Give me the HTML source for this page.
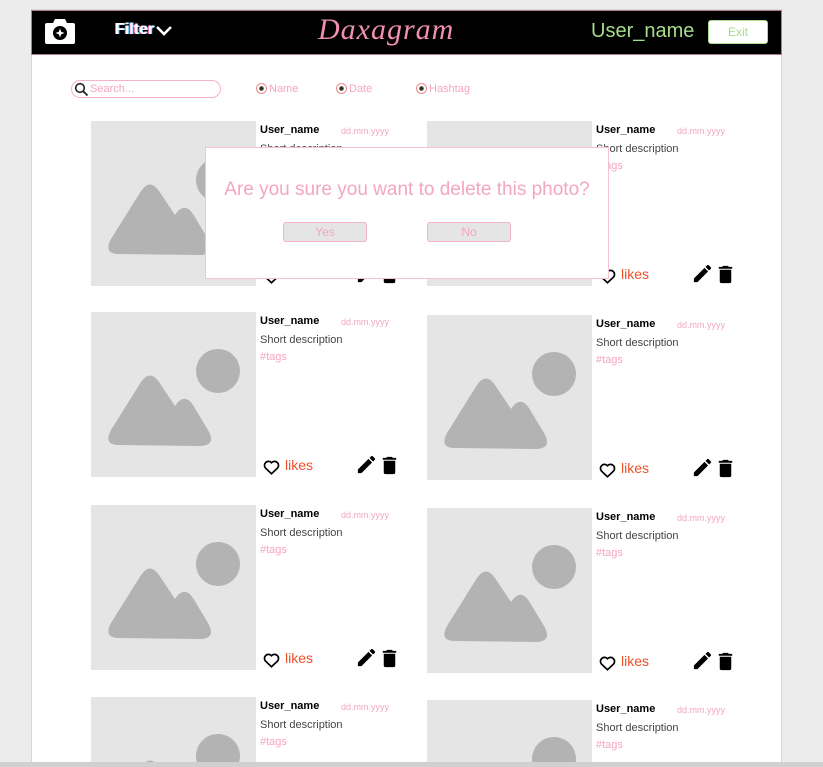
<!DOCTYPE html>
<html><head><meta charset="utf-8"><style>
*{margin:0;padding:0;box-sizing:border-box}
html,body{width:823px;height:767px;overflow:hidden}
body{background:#ececec;font-family:"Liberation Sans",sans-serif}
#w{position:relative;width:823px;height:767px;overflow:hidden}
.page{position:absolute;left:31px;top:9px;width:751px;height:758px;background:#fff;border:1px solid #d8d8d8}
.hdr{position:absolute;left:31px;top:10px;width:751px;height:45px;background:#000;border:1px solid #b07a90}
.a{position:absolute}
.card .img{position:absolute;left:0;top:0;width:165px;height:165px;background:#e5e5e5}
.un{font-size:11px;font-weight:bold;color:#000}
.dt{font-size:9px;color:#f4a6c0}
.ds{font-size:11px;color:#444}
.tg{font-size:11px;color:#f4a6c0}
.lk{font-size:14px;color:#f0502a}
.btn{position:absolute;height:20px;width:84px;background:#e5e5e5;border:1px solid #f4b3c8;border-radius:3px;color:#f4a6c0;font-size:12px;text-align:center;line-height:18px}
</style></head><body><div id="w">
<div class="page"></div>
<div class="hdr"></div>
<svg class="a" style="left:45px;top:17px" width="30" height="28" viewBox="0 0 30 28"><path d="M10 2h10l2 4h6a2 2 0 0 1 2 2v17a2 2 0 0 1-2 2H2a2 2 0 0 1-2-2V8a2 2 0 0 1 2-2h6z" fill="#fff"/><circle cx="15" cy="16" r="7" fill="#000"/><path d="M15 11.5l1.2 3.3 3.3 1.2-3.3 1.2-1.2 3.3-1.2-3.3-3.3-1.2 3.3-1.2z" fill="#fff"/></svg>
<div class="a" style="left:115px;top:21px;font-family:'Liberation Sans Narrow','Liberation Sans',sans-serif;font-weight:bold;font-size:16px;color:#fff;text-shadow:1px 0 #6cf,-1px 0 #f6a">Filter</div>
<svg class="a" style="left:155px;top:25px" width="18" height="12" viewBox="0 0 18 12"><path d="M2 2l7 7 7-7" stroke="#fff" stroke-width="2.6" fill="none"/></svg>
<div class="a" style="left:318px;top:13px;font-family:'Liberation Serif',serif;font-style:italic;font-size:30px;color:#f28fb0;letter-spacing:1px">Daxagram</div>
<div class="a" style="left:591px;top:20px;font-size:20px;color:#a6dc8a">User_name</div>
<div class="a" style="left:708px;top:20px;width:60px;height:24px;background:#fff;border:1px solid #a6dc8a;border-radius:3px;color:#a6dc8a;font-size:12px;text-align:center;line-height:22px">Exit</div>
<div class="a" style="left:71px;top:80px;width:150px;height:18px;border:1px solid #f4b3c8;border-radius:9px"></div>
<svg class="a" style="left:74px;top:82px" width="15" height="15" viewBox="0 0 15 15"><circle cx="6" cy="6" r="4.3" stroke="#222" stroke-width="1.6" fill="none"/><path d="M9 9l4.5 4.5" stroke="#222" stroke-width="1.8"/></svg>
<div class="a" style="left:90px;top:83px;font-size:11px;color:#f4a6c0">Search...</div>
<div class="a" style="left:256px;top:83px;width:11px;height:11px;border:1.5px solid #f08a8a;border-radius:50%;background:radial-gradient(#333 2px,#fff 2.5px)"></div><div class="a" style="left:269px;top:83px;font-size:11px;color:#f4a6c0">Name</div>
<div class="a" style="left:336px;top:83px;width:11px;height:11px;border:1.5px solid #f08a8a;border-radius:50%;background:radial-gradient(#333 2px,#fff 2.5px)"></div><div class="a" style="left:349px;top:83px;font-size:11px;color:#f4a6c0">Date</div>
<div class="a" style="left:416px;top:83px;width:11px;height:11px;border:1.5px solid #f08a8a;border-radius:50%;background:radial-gradient(#333 2px,#fff 2.5px)"></div><div class="a" style="left:429px;top:83px;font-size:11px;color:#f4a6c0">Hashtag</div>
<div id="cards"></div>
<script>
var pos=[[91,121],[427,121],[91,312],[427,315],[91,505],[427,508],[91,697],[427,700]];
var html='';
pos.forEach(function(p){
html+='<div class="a card" style="left:'+p[0]+'px;top:'+p[1]+'px;width:330px;height:'+Math.min(175,767-p[1])+'px;overflow:hidden">'+
'<div class="img"><svg width="165" height="165" viewBox="0 0 165 165"><circle cx="127" cy="59" r="22" fill="#b3b3b3"/><path d="M28 133Q12 133 20 118L50 70Q59 57 68 70L84 94Q93 80 102 93L117 118Q126 134 108 134Z" fill="#b3b3b3"/></svg></div>'+
'<div class="a un" style="left:169px;top:3px">User_name</div>'+
'<div class="a dt" style="left:250px;top:5px">dd.mm.yyyy</div>'+
'<div class="a ds" style="left:169px;top:22px">Short description</div>'+
'<div class="a tg" style="left:169px;top:39px">#tags</div>'+
'<svg class="a" style="left:172px;top:147px" width="17" height="16" viewBox="0 0 24 22"><path d="M12 20.5L3.5 12.5A5.3 5.3 0 0 1 12 5a5.3 5.3 0 0 1 8.5 7.5z" stroke="#000" stroke-width="2.4" fill="none"/></svg>'+
'<div class="a lk" style="left:194px;top:145px">likes</div>'+
'<svg class="a" style="left:264px;top:141px" width="23" height="23" viewBox="0 0 24 24"><path d="M3 17.25V21h3.75L17.81 9.94l-3.75-3.75zM20.71 7.04a1 1 0 0 0 0-1.41l-2.34-2.34a1 1 0 0 0-1.41 0l-1.83 1.83 3.75 3.75z" fill="#000"/></svg>'+
'<svg class="a" style="left:287px;top:141px" width="23" height="25" viewBox="0 0 24 24"><path d="M6 19a2 2 0 0 0 2 2h8a2 2 0 0 0 2-2V7H6zM19 4h-3.5l-1-1h-5l-1 1H5v2h14z" fill="#000"/></svg>'+
'</div>';
});
document.getElementById('cards').innerHTML=html;
</script>
<div class="a" style="left:205px;top:147px;width:404px;height:132px;background:#fff;border:1px solid #f6c2d2"></div>
<div class="a" style="left:205px;top:179px;width:404px;text-align:center;font-size:19px;color:#f4a6c0">Are you sure you want to delete this photo?</div>
<div class="btn" style="left:283px;top:222px">Yes</div>
<div class="btn" style="left:427px;top:222px">No</div>
<div class="a" style="left:0;top:762px;width:823px;height:5px;background:#d0d0d0"></div>
</div></body></html>
